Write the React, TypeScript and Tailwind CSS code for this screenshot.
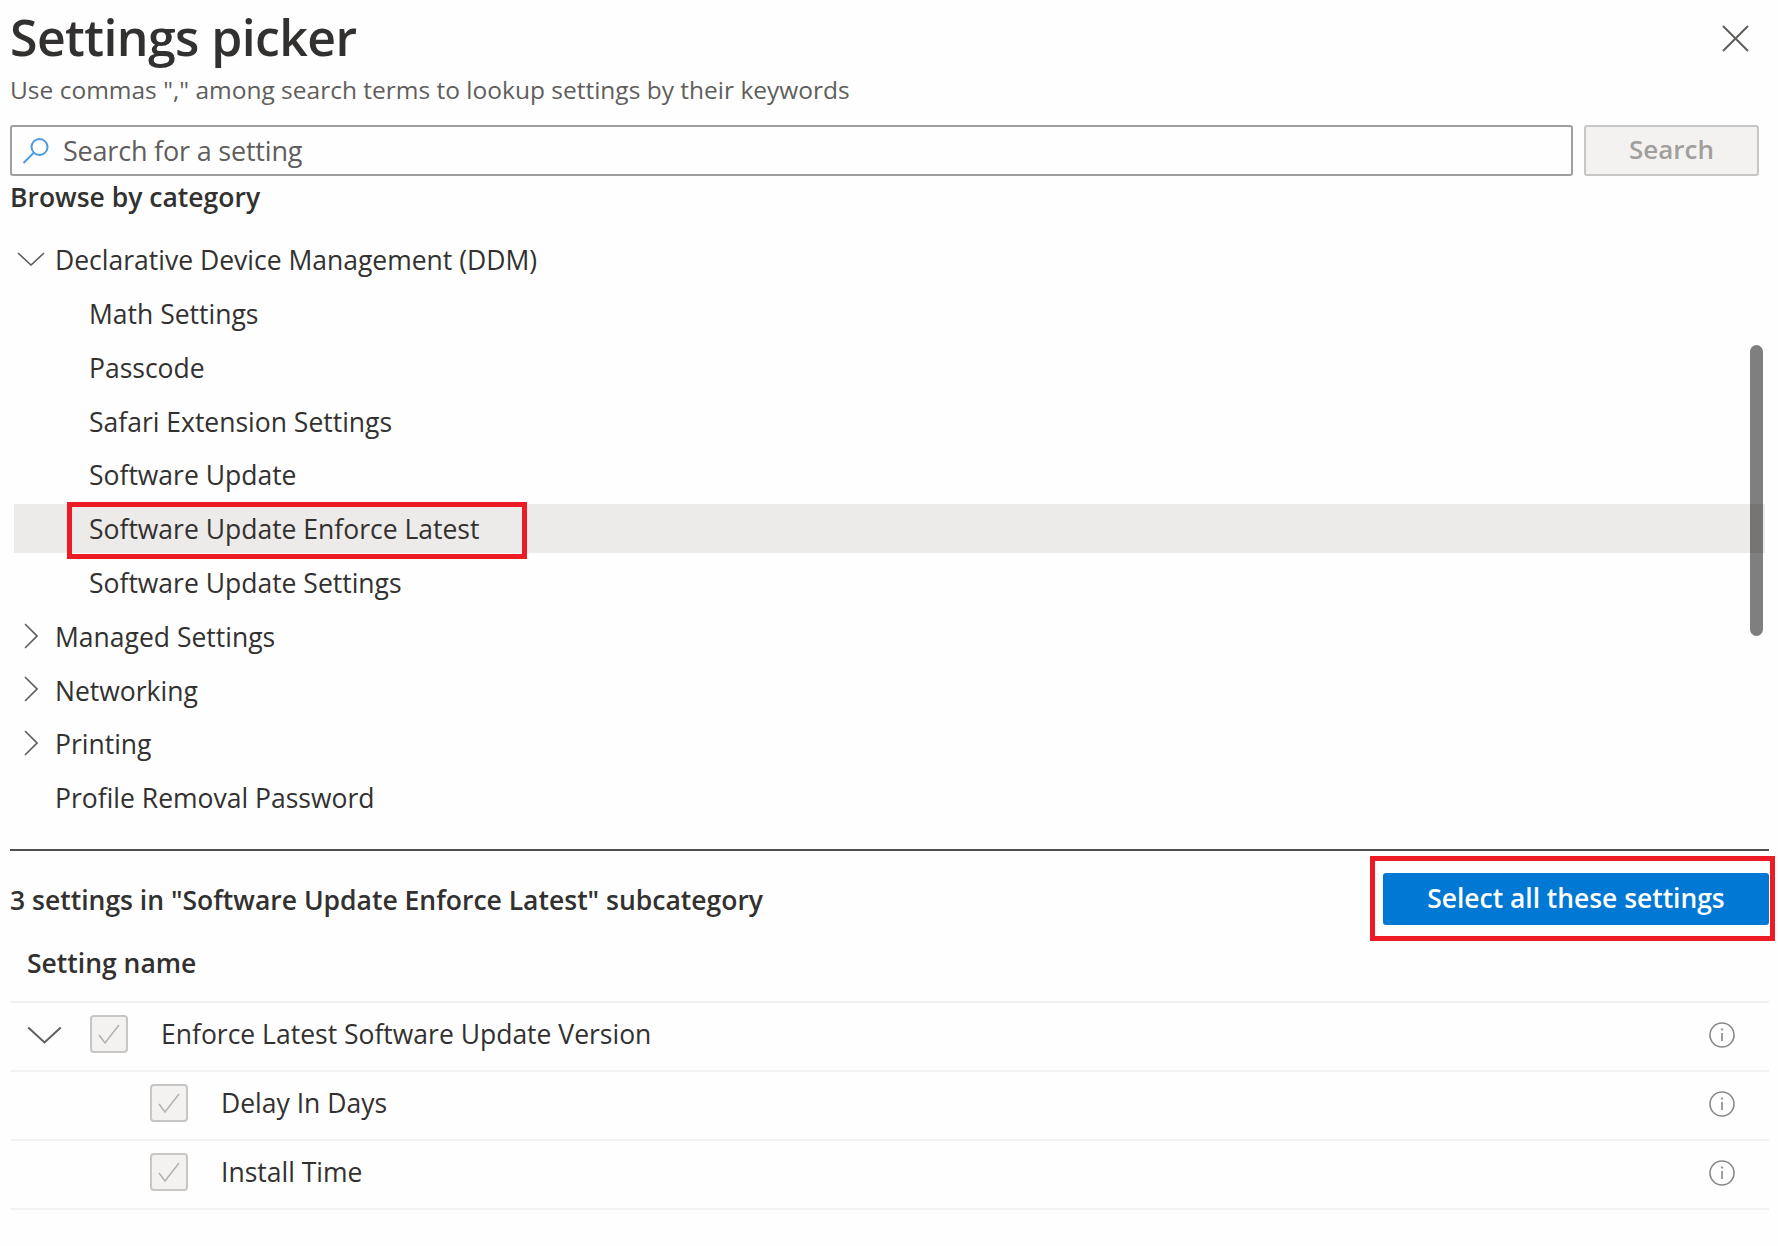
const FONT = "font-['Open_Sans','Noto_Sans',sans-serif]";

const TREE = [
  { label: "Declarative Device Management (DDM)", icon: "down" },
  { label: "Math Settings", child: true },
  { label: "Passcode", child: true },
  { label: "Safari Extension Settings", child: true },
  { label: "Software Update", child: true },
  { label: "Software Update Enforce Latest", child: true, selected: true },
  { label: "Software Update Settings", child: true },
  { label: "Managed Settings", icon: "right" },
  { label: "Networking", icon: "right" },
  { label: "Printing", icon: "right" },
  { label: "Profile Removal Password" },
];

const SETTINGS = [
  { name: "Enforce Latest Software Update Version", parent: true },
  { name: "Delay In Days" },
  { name: "Install Time" },
];

function ChevronDown({ className }: { className: string }) {
  return (
    <svg className={className} viewBox="0 0 28 14" fill="none" stroke="#605e5c" strokeWidth="1.6">
      <path d="M1 1l13 12L27 1" />
    </svg>
  );
}

function ChevronRight() {
  return (
    <svg className="w-[14px] h-[26px]" viewBox="0 0 14 26" fill="none" stroke="#605e5c" strokeWidth="1.6">
      <path d="M1 1l12 12L1 25" />
    </svg>
  );
}

function Check() {
  return (
    <span className="flex items-center justify-center w-[38px] h-[38px] shrink-0 rounded-[4px] border-2 border-[#c8c6c4] bg-[#f3f2f1]">
      <svg className="w-[22px] h-[20px]" viewBox="0 0 22 20" fill="none" stroke="#b3b0ad" strokeWidth="1.5">
        <path d="M1 11l6 8L21 1" />
      </svg>
    </span>
  );
}

function Info() {
  return (
    <svg className="w-[26px] h-[26px] shrink-0 mr-[34px] mb-[2px]" viewBox="0 0 26 26" fill="none">
      <circle cx="13" cy="13" r="12" stroke="#8a8886" strokeWidth="1.6" />
      <path d="M13 11v8" stroke="#a19f9d" strokeWidth="2" />
      <circle cx="13" cy="7.5" r="1.2" fill="#a19f9d" />
    </svg>
  );
}

export default function App() {
  return (
    <div className={`w-[1778px] h-[1246px] overflow-hidden bg-[#fefefe] pl-[10px] pr-[9px] text-[#323130] ${FONT}`}>
      <header className="flex justify-between h-[125px]">
        <div>
          <h1 className="h-[73px] text-[50px] leading-[74px] font-semibold tracking-[-0.6px]">Settings picker</h1>
          <p className="h-[34px] text-[24.5px] leading-[34px] text-[#605e5c]">
            Use commas "," among search terms to lookup settings by their keywords
          </p>
        </div>
        <svg className="w-[27px] h-[27px] mt-[25px] mr-[20px]" viewBox="0 0 27 27" fill="none" stroke="#605e5c" strokeWidth="2">
          <path d="M1 1l25 25M26 1L1 26" />
        </svg>
      </header>

      <div className="flex gap-[11px] h-[51px] mr-[10px]">
        <div className="flex flex-1 items-center rounded-[3px] border-2 border-[#a19f9d] pl-[10px]">
          <svg className="w-[27px] h-[26px] shrink-0" viewBox="0 0 27 26" fill="none" stroke="#4a9be0" strokeWidth="2">
            <circle cx="17.5" cy="9" r="8" />
            <path d="M11.5 15L1.5 25" />
          </svg>
          <span className="ml-[14px] pt-[2px] text-[27px] text-[#605e5c] tracking-[-0.2px]">Search for a setting</span>
        </div>
        <button className="w-[175px] rounded-[3px] border-2 border-[#c8c6c4] bg-[#f3f2f1] text-[26px] font-semibold text-[#a19f9d] pb-[3px]">
          Search
        </button>
      </div>

      <h2 className="h-[42px] text-[26.5px] leading-[42px] font-semibold">Browse by category</h2>

      <div className="relative ml-[4px] mt-[17px] w-[1751px]">
        {TREE.map((row) => (
          <div
            key={row.label}
            className={`relative flex items-center h-[49px] mb-[4.8px] pt-[3px] text-[26.5px] ${row.selected ? "bg-[#edebe9]" : ""} ${row.child ? "pl-[75px]" : "pl-[41px]"}`}
          >
            {row.icon === "down" && <ChevronDown className="absolute left-[3px] top-[17px] w-[28px] h-[14px]" />}
            {row.icon === "right" && (
              <span className="absolute left-[10px] top-[11px]">
                <ChevronRight />
              </span>
            )}
            {row.label}
            {row.selected && (
              <span className="absolute left-[53px] top-[-2px] w-[460px] h-[57px] border-[5px] border-[#ed1c24]" />
            )}
          </div>
        ))}
        <div className="absolute right-[2px] top-[110px] w-[13px] h-[291px] rounded-full bg-black/50" />
      </div>

      <div className="mt-[27px] h-[2px] bg-[#4f4f4f]" />

      <div className="flex items-center justify-between pt-[22px] h-[74px]">
        <p className="text-[26.5px] font-semibold pt-[4px]">3 settings in "Software Update Enforce Latest" subcategory</p>
        <div className="relative">
          <button className="w-[386px] h-[52px] rounded-[3px] bg-[#0078d4] text-[26.4px] font-semibold text-white pb-[1px]">
            Select all these settings
          </button>
          <span className="absolute left-[-13px] right-[-6px] top-[-17px] bottom-[-16px] border-[5px] border-[#ed1c24]" />
        </div>
      </div>

      <div className="flex items-center h-[78px] pt-[2px] border-b-2 border-[#f3f2f1] pl-[17px] text-[26.5px] font-semibold">Setting name</div>

      {SETTINGS.map((s) => (
        <div key={s.name} className="flex items-center h-[69px] border-b-2 border-[#f3f2f1] text-[26.5px]">
          {s.parent ? (
            <span className="flex items-center ml-[17px]">
              <ChevronDown className="w-[35px] h-[18px] mr-[28px] mb-[2px]" />
              <span className="mb-[4px]">
                <Check />
              </span>
            </span>
          ) : (
            <span className="ml-[140px] mb-[4px]">
              <Check />
            </span>
          )}
          <span className="ml-[33px] flex-1 mb-[3px]">{s.name}</span>
          <Info />
        </div>
      ))}
    </div>
  );
}
